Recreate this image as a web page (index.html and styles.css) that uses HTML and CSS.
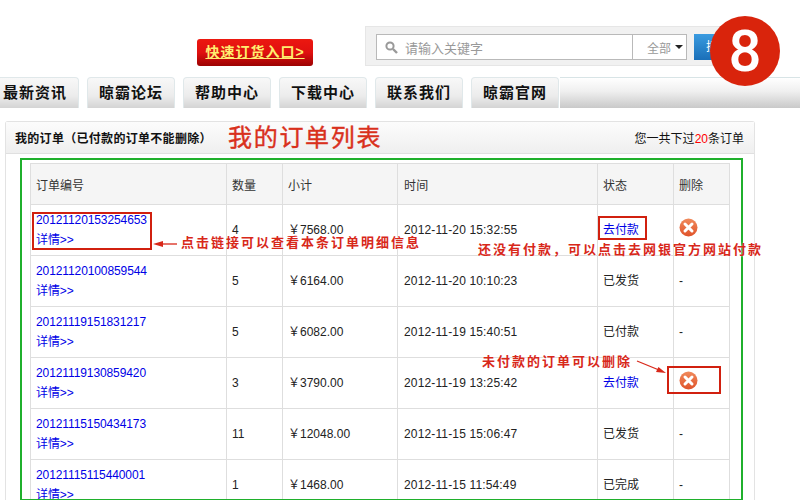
FILE: index.html
```html
<!DOCTYPE html>
<html lang="zh-CN">
<head>
    <meta charset="UTF-8">
    <title>我的订单</title>
    <link rel="stylesheet" href="styles.css">
</head>
<body>
    <div class="page">
        <div class="header">
            <a class="order-btn">快速订货入口&gt;</a>
            <div class="search-box">
                <div class="search-input">
                    <svg class="search-icon" width="13" height="13" viewBox="0 0 13 13"><circle cx="5" cy="5" r="3.6" fill="none" stroke="#999" stroke-width="2"/><path d="M8 8l4 4" stroke="#999" stroke-width="2.4"/></svg>
                    <span class="search-text">请输入关键字</span>
                    <span class="search-cat">全部<i class="caret"></i></span>
                </div>
                <div class="search-btn">搜索</div>
            </div>
        </div>

        <div class="nav">
            <a class="tab">最新资讯</a>
            <a class="tab">晾霸论坛</a>
            <a class="tab">帮助中心</a>
            <a class="tab">下载中心</a>
            <a class="tab">联系我们</a>
            <a class="tab tab-last">晾霸官网</a>
            <div class="nav-fill"></div>
        </div>

        <div class="panel">
            <div class="panel-head">
                <span class="panel-title">我的订单（已付款的订单不能删除）</span>
                <span class="big-title">我的订单列表</span>
                <span class="panel-count">您一共下过<em>20</em>条订单</span>
            </div>
            <div class="green-box">
                <table class="orders">
                    <colgroup>
                        <col class="c-id"><col class="c-num"><col class="c-sum"><col class="c-time"><col class="c-state"><col class="c-del">
                    </colgroup>
                    <tr>
                        <th>订单编号</th><th>数量</th><th>小计</th><th class="time-cell">时间</th><th>状态</th><th>删除</th>
                    </tr>
                    <tr>
                        <td><a>20121120153254653</a><br><a>详情&gt;&gt;</a></td>
                        <td>4</td><td>￥7568.00</td><td class="time-cell">2012-11-20 15:32:55</td>
                        <td><a>去付款</a></td>
                        <td class="del-cell"><svg class="del-icon" width="19" height="19" viewBox="0 0 19 19"><defs><linearGradient id="delFill" x1="0" y1="0" x2="0" y2="1"><stop offset="0" stop-color="#f08a5c"/><stop offset="1" stop-color="#e0532a"/></linearGradient></defs><circle cx="9.5" cy="9.5" r="9" fill="url(#delFill)"/><path d="M6 6l7 7M13 6l-7 7" stroke="#fff" stroke-width="3" stroke-linecap="round"/></svg></td>
                    </tr>
                    <tr>
                        <td><a>20121120100859544</a><br><a>详情&gt;&gt;</a></td>
                        <td>5</td><td>￥6164.00</td><td class="time-cell">2012-11-20 10:10:23</td>
                        <td>已发货</td><td>-</td>
                    </tr>
                    <tr>
                        <td><a>20121119151831217</a><br><a>详情&gt;&gt;</a></td>
                        <td>5</td><td>￥6082.00</td><td class="time-cell">2012-11-19 15:40:51</td>
                        <td>已付款</td><td>-</td>
                    </tr>
                    <tr>
                        <td><a>20121119130859420</a><br><a>详情&gt;&gt;</a></td>
                        <td>3</td><td>￥3790.00</td><td class="time-cell">2012-11-19 13:25:42</td>
                        <td><a>去付款</a></td>
                        <td class="del-cell"><svg class="del-icon" width="19" height="19" viewBox="0 0 19 19"><circle cx="9.5" cy="9.5" r="9" fill="url(#delFill)"/><path d="M6 6l7 7M13 6l-7 7" stroke="#fff" stroke-width="3" stroke-linecap="round"/></svg></td>
                    </tr>
                    <tr>
                        <td><a>20121115150434173</a><br><a>详情&gt;&gt;</a></td>
                        <td>11</td><td>￥12048.00</td><td class="time-cell">2012-11-15 15:06:47</td>
                        <td>已发货</td><td>-</td>
                    </tr>
                    <tr>
                        <td><a>20121115115440001</a><br><a>详情&gt;&gt;</a></td>
                        <td>1</td><td>￥1468.00</td><td class="time-cell">2012-11-15 11:54:49</td>
                        <td>已完成</td><td>-</td>
                    </tr>
                </table>
            </div>
        </div>

        <!-- annotations drawn on top of the screenshot -->
        <div class="mark mark-id"></div>
        <div class="mark mark-pay"></div>
        <div class="mark mark-del"></div>
        <div class="note note-id">点击链接可以查看本条订单明细信息</div>
        <div class="note note-pay">还没有付款，可以点击去网银官方网站付款</div>
        <div class="note note-del">未付款的订单可以删除</div>
        <svg class="arrows" width="800" height="500" viewBox="0 0 800 500">
            <path d="M177 244H160" stroke="#d8281a" stroke-width="1.3"/>
            <path d="M153 244l10-3v6z" fill="#d8281a"/>
            <path d="M637 361l22 9" stroke="#d8281a" stroke-width="1.3"/>
            <path d="M666 373l-10-1 2.400-5z" fill="#d8281a"/>
        </svg>
        <div class="step">8</div>
    </div>
</body>
</html>
```

FILE: styles.css
```css
html, body {
    margin: 0;
    padding: 0;
    background: #fff;
}
.page {
    position: relative;
    width: 800px;
    height: 500px;
    overflow: hidden;
    font-family: "Liberation Sans", "Noto Sans CJK SC", sans-serif;
    font-size: 12px;
    color: #222;
}
.header {
    display: flex;
    align-items: flex-start;
    height: 77px;
}
.order-btn {
    box-sizing: border-box;
    width: 116px;
    height: 27px;
    margin: 39px 0 0 197px;
    border-radius: 3px;
    background: linear-gradient(#ec1810, #e01010 50%, #9c0202);
    color: #ffee70;
    font-size: 14px;
    font-weight: bold;
    letter-spacing: 1px;
    line-height: 26px;
    text-align: center;
    text-decoration: underline;
}
.search-box {
    box-sizing: border-box;
    display: flex;
    width: 380px;
    height: 40px;
    margin: 26px 0 0 52px;
    padding: 7px 10px;
    background: #f1f1f1;
    border: 1px solid #e6e6e6;
}
.search-input {
    box-sizing: border-box;
    display: flex;
    flex: none;
    align-items: center;
    width: 311px;
    height: 26px;
    background: #fff;
    border: 1px solid #b9b9b9;
}
.search-icon {
    margin-left: 8px;
}
.search-text {
    margin-left: 7px;
    color: #999;
    font-size: 13px;
    flex: 1;
}
.search-cat {
    box-sizing: border-box;
    display: flex;
    align-items: center;
    width: 54px;
    height: 24px;
    padding-left: 14px;
    border-left: 1px solid #b9b9b9;
    color: #999;
}
.caret {
    width: 0;
    height: 0;
    margin-left: 4px;
    border: 4px solid transparent;
    border-top-color: #222;
    border-bottom: 0;
}
.search-btn {
    flex: none;
    width: 48px;
    height: 26px;
    margin-left: 7px;
    background: linear-gradient(#3a9be0, #1a6fb8);
    color: #fff;
    line-height: 26px;
    text-align: center;
}

.nav {
    display: flex;
    height: 31px;
    margin-left: -9px;
}
.tab {
    box-sizing: border-box;
    width: 88px;
    height: 31px;
    margin-right: 8px;
    border: 1px solid #e0e8ea;
    border-bottom: 0;
    border-radius: 4px 4px 0 0;
    background: linear-gradient(#f8f8f8, #ececec 60%, #d4d4d4);
    color: #111;
    font-size: 15px;
    font-weight: bold;
    letter-spacing: 1px;
    line-height: 30px;
    text-align: center;
}
.tab-last {
    margin-right: 1px;
}
.nav-fill {
    flex: 1;
    border-top: 1px solid #d8e4e6;
    background: linear-gradient(#fff, #efefef 45%, #c9c9c9);
}

.panel {
    box-sizing: border-box;
    width: 750px;
    height: 400px;
    margin: 13px 0 0 5px;
    border: 1px solid #e3e3e3;
    border-bottom: 0;
    border-radius: 3px 3px 0 0;
}
.panel-head {
    display: flex;
    align-items: center;
    height: 31px;
    padding: 0 10px 0 9px;
    background: linear-gradient(#fcfcfc, #efefef);
    border-bottom: 1px solid #e0e0e0;
}
.panel-title {
    width: 213px;
    color: #111;
    font-weight: bold;
    letter-spacing: 0.300px;
}
.big-title {
    flex: 1;
    color: #d9301c;
    font-size: 24px;
    letter-spacing: 1.700px;
    line-height: 30px;
    -webkit-text-stroke: 0.4px #d9301c;
}
.panel-count {
    color: #111;
}
.panel-count em {
    color: #f00;
    font-style: normal;
}
.green-box {
    box-sizing: border-box;
    width: 723px;
    height: 342px;
    margin: 4px 0 0 14px;
    padding: 3px 0 0 8px;
    overflow: hidden;
    border: 2px solid #1fb02c;
    border-bottom-width: 1px;
}

.orders {
    width: 699px;
    border-collapse: collapse;
    table-layout: fixed;
}
.c-id { width: 196px; }
.c-num { width: 56px; }
.c-sum { width: 115px; }
.c-time { width: 200px; }
.c-state { width: 76px; }
.c-del { width: 56px; }
.orders th, .orders td {
    box-sizing: border-box;
    padding: 0 5px;
    border: 1px solid #dedede;
    text-align: left;
    font-weight: normal;
}
.orders th {
    height: 41px;
    background: #f5f5f5;
    color: #333;
}
.orders td {
    height: 51px;
    line-height: 20px;
}
.orders a {
    color: #0000e6;
    letter-spacing: -0.100px;
}
.orders .time-cell {
    padding-left: 6px;
    letter-spacing: 0.150px;
}
.orders .del-cell {
    padding-bottom: 6px;
}
.del-icon {
    display: block;
}

.mark {
    position: absolute;
    box-sizing: border-box;
    border: 2px solid #d1200f;
}
.mark-id { left: 32px; top: 212px; width: 120px; height: 38px; }
.mark-pay { left: 598px; top: 216px; width: 49px; height: 24px; }
.mark-del { left: 667px; top: 366px; width: 54px; height: 28px; }

.note {
    position: absolute;
    color: #d8281a;
    font-size: 13px;
    font-weight: bold;
    letter-spacing: 2px;
    line-height: 18px;
    white-space: nowrap;
    text-shadow: 0 0 2px #fff;
}
.note-id { left: 181px; top: 234px; }
.note-pay { left: 478px; top: 241px; }
.note-del { left: 482px; top: 353px; }
.arrows {
    position: absolute;
    left: 0;
    top: 0;
    pointer-events: none;
}
.step {
    position: absolute;
    left: 710px;
    top: 16px;
    width: 70px;
    height: 70px;
    border-radius: 50%;
    background: #d9240c;
    color: #fff;
    font-family: Roboto, sans-serif;
    font-size: 58px;
    font-weight: 500;
    line-height: 70px;
    text-align: center;
}
```
